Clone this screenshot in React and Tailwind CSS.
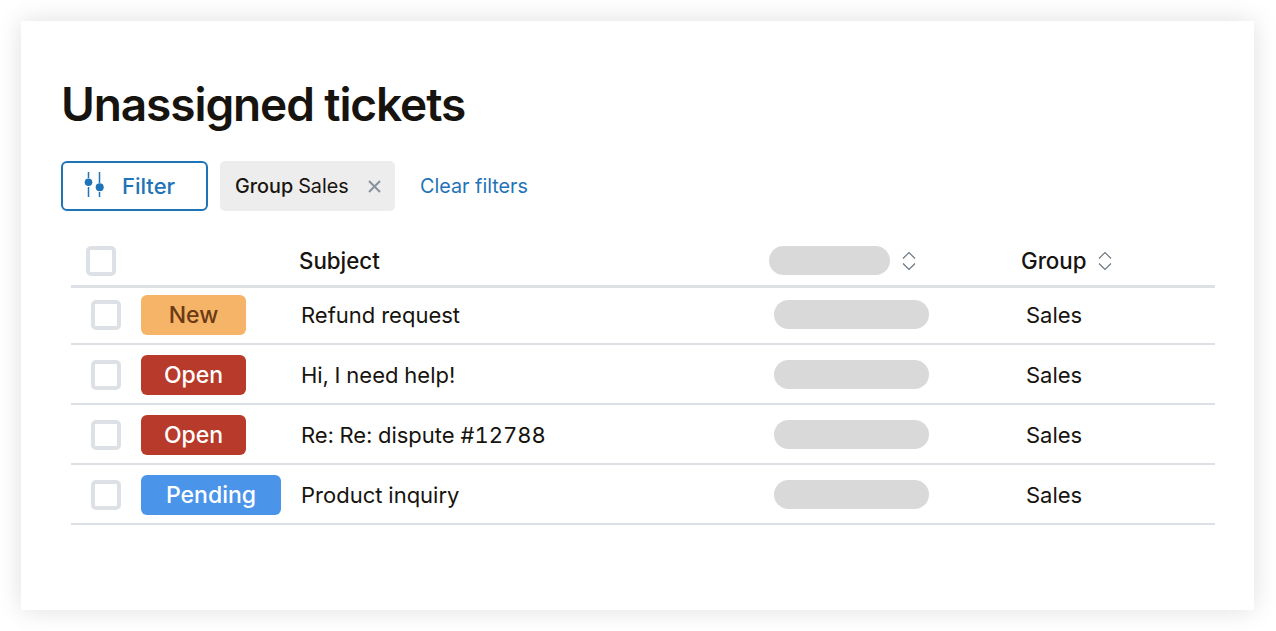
const ROWS = [
  { status: 'New', badge: 'w-[105px] bg-[#f5b467] text-[#6b3a14]', subject: 'Refund request' },
  { status: 'Open', badge: 'w-[105px] bg-[#b83a2a] text-white', subject: 'Hi, I need help!' },
  { status: 'Open', badge: 'w-[105px] bg-[#b83a2a] text-white', subject: 'Re: Re: dispute #12788' },
  { status: 'Pending', badge: 'w-[140px] bg-[#4a94ea] text-white', subject: 'Product inquiry' },
];

function Checkbox({ className = '' }) {
  return <div className={`size-[30px] rounded-[5px] border-4 border-[#dde0e4] bg-white ${className}`} />;
}

function SortIcon() {
  return (
    <svg width="16" height="20" viewBox="0 0 16 20" fill="none" stroke="#68737d" strokeWidth="1.1">
      <path d="M2 7.5 8 1.5l6 6" />
      <path d="M2 12.5l6 6 6-6" />
    </svg>
  );
}

function FilterIcon() {
  return (
    <svg className="overflow-visible" width="22" height="28" viewBox="0 0 22 28" fill="none">
      <path d="M3.5 0v6M3.5 15v10M14.5 0v11M14.5 20v5" stroke="#1f73b7" strokeWidth="1.5" />
      <circle cx="3.5" cy="10.3" r="3.8" fill="#1f73b7" />
      <circle cx="14.7" cy="15.3" r="4" fill="#1f73b7" />
    </svg>
  );
}

export default function App() {
  return (
    <div className="h-[631px] bg-white pb-[21px] pl-[21px] pr-[22px] pt-[21px] font-['Inter',sans-serif] text-[#17140f]">
      <div className="h-[589px] bg-white pl-[40px] pr-[40px] pt-[52px] shadow-[0_0_24px_rgba(0,0,0,0.13)]">
        <h1 className="text-[46px] font-semibold leading-[62px] tracking-[-1.1px]">Unassigned tickets</h1>

        {/* Filters */}
        <div className="mt-[26px] flex h-[50px] items-center">
          <button className="flex h-[50px] w-[147px] items-center rounded-[6px] border-2 border-[#1f73b7] pl-[22px] text-[22px] font-medium text-[#1f73b7]">
            <FilterIcon />
            <span className="ml-[15px]">Filter</span>
          </button>
          <div className="ml-[12px] flex h-[50px] w-[175px] items-center rounded-[5px] bg-[#ededed] pl-[15px] text-[19.8px]">
            <span className="pt-[2px] font-medium">Group</span>
            <span className="ml-[5px] pt-[2px]">Sales</span>
            <svg className="ml-[19px]" width="13" height="13" viewBox="0 0 13 13" stroke="#87929d" strokeWidth="2">
              <path d="M1 1l11 11M12 1L1 12" />
            </svg>
          </div>
          <a className="ml-[25px] pt-[2px] text-[19.8px] text-[#1f73b7]">Clear filters</a>
        </div>

        {/* Table */}
        <div className="ml-[10px] mt-[20px] w-[1144px]">
          <div className="grid h-[57px] grid-cols-[228px_470px_252px_1fr] items-center border-b-[3px] border-[#dde0e4] pt-[5px] text-[22.3px] font-[450]">
            <Checkbox className="ml-[15px]" />
            <span className="pt-px">Subject</span>
            <div className="flex items-center gap-[11px]">
              <div className="h-[29px] w-[121px] rounded-full bg-[#d9d9d9]" />
              <SortIcon />
            </div>
            <div className="flex items-center gap-[10px] pt-px">
              <span>Group</span>
              <SortIcon />
            </div>
          </div>
          <div>
            {ROWS.map((row) => (
              <div
                key={row.subject}
                className="grid h-[60px] grid-cols-[70px_160px_473px_252px_1fr] items-center border-b-2 border-[#dde0e4] pt-px text-[22px] tabular-nums first:h-[57px] first:pb-[2px] first:pt-0"
              >
                <Checkbox className="ml-[20px]" />
                <div className={`flex h-[40px] items-center justify-center rounded-[6px] pt-[2px] text-[23px] font-medium ${row.badge}`}>
                  {row.status}
                </div>
                <span className="pt-[2px]">{row.subject}</span>
                <div className="h-[29px] w-[155px] rounded-full bg-[#d9d9d9]" />
                <span className="pt-[2px]">Sales</span>
              </div>
            ))}
          </div>
        </div>
      </div>
    </div>
  );
}
